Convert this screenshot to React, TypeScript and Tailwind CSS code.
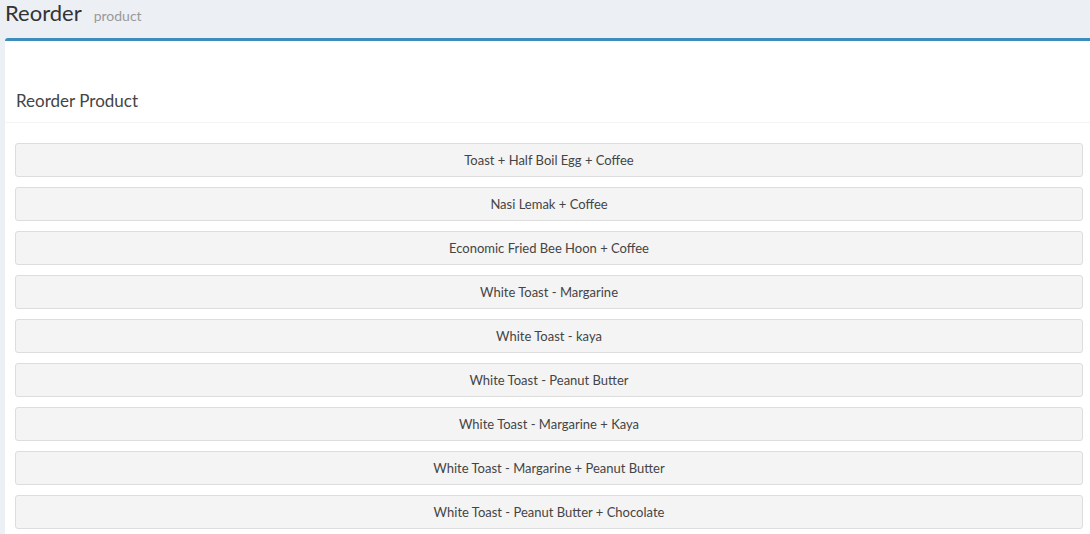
import React from "react";

const products = [
  "Toast + Half Boil Egg + Coffee",
  "Nasi Lemak + Coffee",
  "Economic Fried Bee Hoon + Coffee",
  "White Toast - Margarine",
  "White Toast - kaya",
  "White Toast - Peanut Butter",
  "White Toast - Margarine + Kaya",
  "White Toast - Margarine + Peanut Butter",
  "White Toast - Peanut Butter + Chocolate",
];

export default function App() {
  return (
    <div className="h-[534px] w-[1090px] overflow-hidden bg-[#ecf0f5] font-['Lato','Liberation_Sans',sans-serif]">
      <div className="flex h-[38px] items-baseline gap-[12px] px-[5px]">
        <h1 className="text-[22px] leading-[26px] text-[#333]">Reorder</h1>
        <span className="text-[14px] text-[#999]">product</span>
      </div>

      <div className="ml-[5px] w-[1088px] rounded-[3px] border-t-[3px] border-[#3c8dbc] bg-white">
        <div className="border-b border-[#f4f4f4] px-[11px] pb-[11px] pt-[50px]">
          <h3 className="text-[17px] leading-[20px] text-[#444]">Reorder Product</h3>
        </div>
        <div className="flex flex-col gap-[10px] px-[10px] pt-[20px] pb-[10px]">
          {products.map((p) => (
            <button
              key={p}
              type="button"
              className="h-[34px] w-full rounded-[3px] border border-[#ddd] bg-[#f4f4f4] pt-[2px] text-[13px] text-[#444]"
            >
              {p}
            </button>
          ))}
        </div>
      </div>
    </div>
  );
}
